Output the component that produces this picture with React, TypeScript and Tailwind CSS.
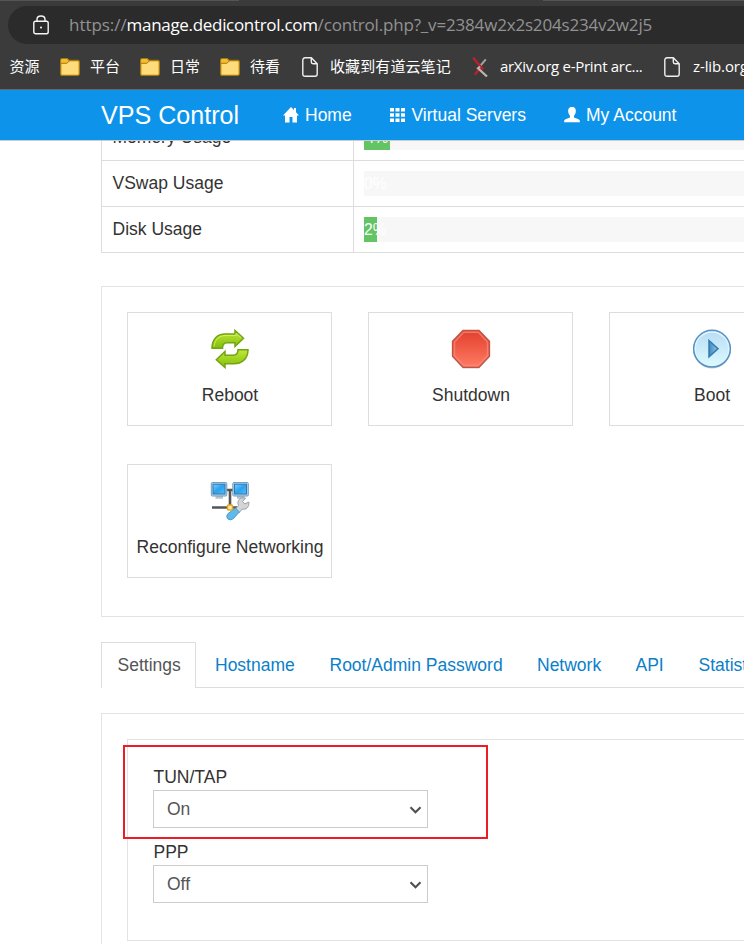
import type { ReactNode } from "react";

const chromeFont = "font-['Open_Sans','Noto_Sans_CJK_SC',sans-serif]";

function FolderIcon() {
  return (
    <svg width="20" height="18" viewBox="0 0 20 18" className="shrink-0">
      <path d="M.7 2.2Q.7.7 2.2.7H7.2L9.2 2.5H17.8Q19.3 2.5 19.3 4V15.8Q19.3 17.3 17.8 17.3H2.2Q.7 17.3.7 15.8Z" fill="#ffdc7b" stroke="#a87a0d" strokeWidth="1.3" />
      <path d="M1.3 2Q1.3 1.3 2 1.3H7L8.7 3.1 7 5H1.3Z" fill="#f4bd2b" />
      <path d="M1 5.3H7L9.2 3" fill="none" stroke="#a87a0d" strokeWidth="1" />
    </svg>
  );
}

function PageIcon() {
  return (
    <svg width="16" height="20" viewBox="0 0 16 20" className="shrink-0" fill="none" stroke="#f0f0f0" strokeWidth="1.4">
      <path d="M3.2.8H9.3L15.2 6.7V17Q15.2 19.2 13 19.2H3.2Q.8 19.2.8 17V3.2Q.8.8 3.2.8ZM9.3.8V5Q9.3 6.7 11 6.7H15.2" />
    </svg>
  );
}

function ArxivIcon() {
  return (
    <svg width="17" height="20" viewBox="0 0 17 20" className="shrink-0" fill="none">
      <path d="M13.8 2.3 8 9.2" stroke="#aaa29b" strokeWidth="2" />
      <path d="M1.2.8 11 12.5M9.5 9.5 2.8 17.5" stroke="#c01f2b" strokeWidth="2.3" />
      <path d="M8 9.5 6 11.2 15 19.5" stroke="#bdb5ad" strokeWidth="2.2" />
    </svg>
  );
}

function RebootIcon() {
  return (
    <svg width="40" height="40" viewBox="0 0 40 40">
      <defs>
        <linearGradient id="green" x2="0" y2="1">
          <stop stopColor="#c2e936" />
          <stop offset="1" stopColor="#82bd0e" />
        </linearGradient>
      </defs>
      <path d="M2 19.2C2 9.5 8 4.9 15 4.9H25V1.5L33.5 9.3 25 17.5V13.8H17C13.5 13.8 12.5 15.5 12.5 19.2Z" fill="url(#green)" stroke="#71a512" strokeWidth="1.5" />
      <path d="M38 20.7C38 30.5 31 34.8 24 34.8H15V38.5L6.3 30.8 15 22.5V26.2H23C26.5 26.2 28 24.5 28 20.7Z" fill="url(#green)" stroke="#71a512" strokeWidth="1.5" />
      <path d="M4 17.5C5 9.5 10 6.5 16 6.5H26V4.5L31 8.5" fill="none" stroke="#d9f274" opacity=".8" />
    </svg>
  );
}

function ShutdownIcon() {
  return (
    <svg width="40" height="40" viewBox="0 0 40 40">
      <defs>
        <linearGradient id="red" x2="0" y2="1">
          <stop stopColor="#e2402e" />
          <stop offset="1" stopColor="#ff7a62" />
        </linearGradient>
      </defs>
      <path d="M12 2H28L38.5 13V28L28 39.7H12L1.5 28V13Z" fill="#777" opacity=".3" />
      <path d="M12 1.3H28L38.5 12.3V27.3L28 38.3H12L1.5 27.3V12.3Z" fill="url(#red)" stroke="#c05345" strokeWidth="1.3" />
      <path d="M12.7 3.3H27.3L36.5 13V26.6L27.3 36.3H12.7L3.5 26.6V13Z" fill="none" stroke="#f18b7c" strokeWidth="1.4" opacity=".75" />
    </svg>
  );
}

function BootIcon() {
  return (
    <svg width="40" height="40" viewBox="0 0 40 40">
      <defs>
        <linearGradient id="disc" x2="0" y2="1">
          <stop stopColor="#b8dcf4" />
          <stop offset="1" stopColor="#dcfaff" />
        </linearGradient>
        <linearGradient id="play">
          <stop stopColor="#4388bd" />
          <stop offset="1" stopColor="#8ec9ed" />
        </linearGradient>
      </defs>
      <circle cx="20" cy="20.9" r="18.7" fill="#777" opacity=".35" />
      <circle cx="20" cy="19.7" r="18.3" fill="url(#disc)" stroke="#5693c5" strokeWidth="1.6" />
      <circle cx="20" cy="19.7" r="16.7" fill="none" stroke="#e0f4fd" strokeWidth="1.3" />
      <path d="M17 11.5 26 19.7 17 27.9Z" fill="url(#play)" stroke="#357ab0" strokeWidth="1.5" />
    </svg>
  );
}

function NetworkIcon() {
  return (
    <svg width="40" height="40" viewBox="0 0 40 40">
      <defs>
        <linearGradient id="screen" x2="1" y2="1">
          <stop stopColor="#79d1ff" />
          <stop offset=".5" stopColor="#2ba1ed" />
          <stop offset="1" stopColor="#55bdf7" />
        </linearGradient>
      </defs>
      <path d="M14 9H26M20 9V25M2 26.5H27" stroke="#555" strokeWidth="2.6" fill="none" />
      <path d="M5.5 16.3H13M27 16.3H34.5" stroke="#b9c3c9" strokeWidth="2.8" />
      <rect x="1.3" y="1.5" width="15.5" height="13.5" rx="1" fill="#b8d4e8" stroke="#6f9fc4" />
      <rect x="3" y="3.2" width="12" height="9.8" fill="url(#screen)" stroke="#3276ae" />
      <rect x="22.8" y="1.5" width="15.5" height="13.5" rx="1" fill="#b8d4e8" stroke="#6f9fc4" />
      <rect x="24.5" y="3.2" width="12" height="9.8" fill="url(#screen)" stroke="#3276ae" />
      <path d="M25.5 28 28.5 24.5C26.5 19.5 30 15.8 35.5 17L32.5 20.5 34.8 23 38.8 21C39.5 26 36 29 32.3 28L28.8 32Z" fill="#d3d5d7" stroke="#989fa3" />
      <path d="M25.5 27 29.3 31 23.5 37.5Q20.5 40 18 38 15.7 36 17.5 33Z" fill="#60b9ed" stroke="#4a9ccc" />
      <rect x="17.5" y="24" width="5" height="5" rx="1" fill="#fff1ac" stroke="#e9a21b" strokeWidth="1.6" />
    </svg>
  );
}

function Bookmark({ icon, label, className }: { icon?: ReactNode; label: string; className: string }) {
  return (
    <div className={`flex shrink-0 items-center whitespace-nowrap ${className}`}>
      {icon}
      <span>{label}</span>
    </div>
  );
}

function UsageRow({ label, value, width }: { label: string; value: string; width: string }) {
  return (
    <div className="flex h-[46px] border-b border-[#ddd]">
      <div className="w-[252px] shrink-0 border-r border-[#ddd] pt-[10px] pl-[10.5px]">{label}</div>
      <div className="flex-1 pt-[10px] pl-[10px]">
        <div className="h-[25px] bg-[#f7f7f7]">
          <div className={`flex h-full bg-[#62c462] text-[15.75px] leading-[25px] text-white ${width}`}>{value}</div>
        </div>
      </div>
    </div>
  );
}

function ActionCard({ icon, label }: { icon: ReactNode; label: string }) {
  return (
    <div className="flex h-[114px] w-[205px] flex-col items-center border border-[#ddd] pt-4 pl-px whitespace-nowrap">
      {icon}
      <span className="mt-[14px]">{label}</span>
    </div>
  );
}

function SelectField({ label, value }: { label: string; value: string }) {
  return (
    <div className="h-[75px]">
      <div className="h-[25px] pl-[0.5px]">{label}</div>
      <button className="flex h-[38px] w-[275px] items-center justify-between border border-[#ccc] bg-white pr-[5px] pl-[13px] text-[#555]">
        <span>{value}</span>
        <svg width="13" height="8" viewBox="0 0 13 8" className="mt-px">
          <path d="M1.5 1.2 6.5 6.2 11.5 1.2" fill="none" stroke="#505050" strokeWidth="2.1" />
        </svg>
      </button>
    </div>
  );
}

export default function App() {
  return (
    <div className="flex h-[944px] w-[744px] flex-col overflow-hidden bg-white font-['Liberation_Sans',Arial,sans-serif] text-[17.5px] leading-[25px] text-[#333]">
      <header className={`h-[90px] shrink-0 overflow-hidden border-b border-[#696969] bg-[#3b3b3b] text-white ${chromeFont}`}>
        <div className="flex h-1.5 justify-between">
          <div className="h-px w-[239px] bg-[#555]" />
          <div className="h-px w-[201px] bg-[#555]" />
        </div>
        <div className="ml-2 flex h-[38px] items-center rounded-l-full bg-[#2b2b2b] pl-[24.5px]">
          <svg width="16" height="20" viewBox="0 0 16 20" fill="none" stroke="#f5f5f5" strokeWidth="1.4" className="mb-px">
            <rect x=".8" y="6.3" width="14.4" height="12.5" rx="1.8" />
            <path d="M4 6.3V4.5Q4 1 8 1T12 4.5V6.3" />
            <circle cx="8" cy="12.5" r="1" fill="white" stroke="none" />
          </svg>
          <div className="mb-0.5 ml-[20.5px] text-[17px] whitespace-nowrap text-[#929292]">
            <span className="tracking-[-0.05px]">https://</span>
            <span className="tracking-[-0.31px] text-white">manage.dedicontrol.com</span>
            <span className="tracking-[-0.18px]">/control.php?_v=2384w2x2s204s234v2w2j5</span>
          </div>
        </div>
        <div className="flex h-[45px] items-center text-[15px]">
          <div className="h-[17px] w-px bg-[#c9970f]" />
          <Bookmark label="资源" className="w-[60px] pl-[9.5px]" />
          <Bookmark icon={<FolderIcon />} label="平台" className="w-20 gap-[10px]" />
          <Bookmark icon={<FolderIcon />} label="日常" className="w-20 gap-[10px]" />
          <Bookmark icon={<FolderIcon />} label="待看" className="w-[82px] gap-[10px]" />
          <Bookmark icon={<PageIcon />} label="收藏到有道云笔记" className="w-[170px] gap-[12px] tracking-[0.1px]" />
          <Bookmark icon={<ArxivIcon />} label="arXiv.org e-Print arc..." className="w-[192px] gap-[11px] tracking-[-0.3px]" />
          <Bookmark icon={<PageIcon />} label="z-lib.org" className="gap-[13px] tracking-[-0.1px]" />
        </div>
      </header>
      <nav className="flex h-[51px] shrink-0 items-center border-b border-[#ccc] bg-[#0d94ea] pl-[101px] whitespace-nowrap text-white">
        <div className="w-[182px] text-[25.1px]">VPS Control</div>
        <div className="flex w-[107px] items-center gap-[6px]">
          <svg width="16" height="16" viewBox="0 0 16 16" fill="white">
            <path d="M8 0 0 8.4H2V15.5H6.5V10H9.5V15.5H14V8.4H16L13 5.2V1H11V3.1Z" />
          </svg>
          <span>Home</span>
        </div>
        <div className="flex w-[174px] items-center gap-[6.5px]">
          <svg width="15" height="14" viewBox="0 0 15 14" fill="white">
            <path d="M0 0H4V3.5H0ZM5.5 0H9.5V3.5H5.5ZM11 0H15V3.5H11ZM0 5.2H4V8.7H0ZM5.5 5.2H9.5V8.7H5.5ZM11 5.2H15V8.7H11ZM0 10.4H4V13.9H0ZM5.5 10.4H9.5V13.9H5.5ZM11 10.4H15V13.9H11Z" />
          </svg>
          <span>Virtual Servers</span>
        </div>
        <div className="flex items-center gap-[6px]">
          <svg width="16" height="16" viewBox="0 0 16 16" fill="white">
            <path d="M8 0C5 0 4 2 4.2 4.5 4.3 6.7 5.3 7.5 6 8.8V10.4L1.5 12.3Q0 13 0 15.3H16Q16 13 14.5 12.3L10 10.4V8.8C10.7 7.5 11.7 6.7 11.8 4.5 12 2 11 0 8 0Z" />
          </svg>
          <span>My Account</span>
        </div>
      </nav>
      <main className="min-h-0 flex-1 overflow-hidden pl-[101px]">
        <section className="-mt-[26px] w-[900px] border-l border-[#ddd]">
          <UsageRow label="Memory Usage" value="4%" width="w-[26px] justify-center" />
          <UsageRow label="VSwap Usage" value="0%" width="w-0" />
          <UsageRow label="Disk Usage" value="2%" width="w-[13px]" />
        </section>
        <section className="mt-[33px] h-[331px] w-[900px] border border-[#e3e3e3] p-[25px]">
          <div className="grid grid-cols-[205px_205px_205px] gap-x-9 gap-y-[38px]">
            <ActionCard icon={<RebootIcon />} label="Reboot" />
            <ActionCard icon={<ShutdownIcon />} label="Shutdown" />
            <ActionCard icon={<BootIcon />} label="Boot" />
            <ActionCard icon={<NetworkIcon />} label="Reconfigure Networking" />
          </div>
        </section>
        <div className="mt-[25px] flex h-[46px] w-[900px] whitespace-nowrap text-[#0b80c9]">
          <div className="w-[95px] border border-b-0 border-[#ddd] pt-[10px] pl-[15.5px] text-[#555]">Settings</div>
          <div className="flex flex-1 border-b border-[#ddd] pt-[11px] pl-[19px]">
            <span className="w-[114.5px]">Hostname</span>
            <span className="w-[207.5px]">Root/Admin Password</span>
            <span className="w-[98.5px]">Network</span>
            <span className="w-[63px]">API</span>
            <span>Statistics</span>
          </div>
        </div>
        <section className="mt-[25px] h-[300px] w-[900px] border border-[#e3e3e3] p-[25px]">
          <div className="relative h-[202px] border border-[#e3e3e3] pt-[25px] pl-[25px]">
            <SelectField label="TUN/TAP" value="On" />
            <SelectField label="PPP" value="Off" />
            <div className="pointer-events-none absolute top-[5px] -left-[5px] h-[94px] w-[365px] border-2 border-[#ed1c24]" />
          </div>
        </section>
      </main>
    </div>
  );
}
